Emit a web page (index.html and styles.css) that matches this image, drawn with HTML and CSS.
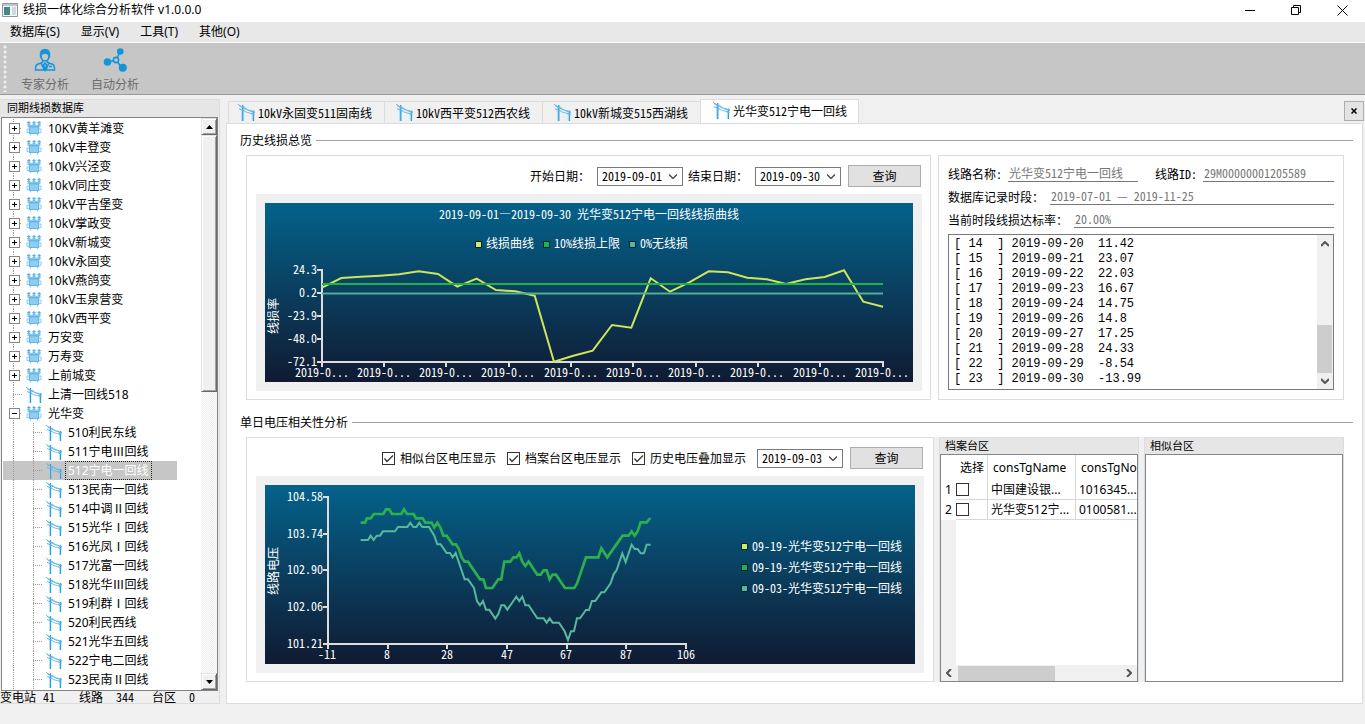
FILE: index.html
```html
<!DOCTYPE html>
<html lang="zh-CN">
<head>
<meta charset="utf-8">
<title>线损一体化综合分析软件 v1.0.0.0</title>
<link rel="stylesheet" href="styles.css">
</head>
<body>
<svg class="defs" aria-hidden="true">
  <symbol id="i-station" viewBox="0 0 16 16">
    <path d="M2.800 0v4M8 0v4M13.200 0v4" stroke="#8ccbf0" stroke-width="1.600"/>
    <path d="M1.200 1.500h3.200M6.400 1.500h3.200M11.600 1.500h3.200M1.200 3.200h3.200M6.400 3.200h3.200M11.600 3.200h3.200" stroke="#4fb0e6" stroke-width="1"/>
    <path d="M1.500 4.300h13v1.400h-1.300V13H2.800V5.700H1.500z" fill="#63b7e8"/>
    <path d="M5 6.500v5.500M7 6.500v5.500M9 6.500v5.500M11 6.500v5.500" stroke="#d4edfb" stroke-width=".8"/>
    <path d="M2.800 8H1v3.500h1.800M13.200 8H15v3.500h-1.800M4.500 13v1.500M11.500 13v1.500" stroke="#8ccbf0" fill="none"/>
  </symbol>
  <symbol id="i-line" viewBox="0 0 16 16">
    <path d="M4.500 1v15M14.500 6v10" stroke="#2c9fdc" stroke-width="1.300"/>
    <path d="M3.400 3v13M13.400 7v9" stroke="#a6d8f2" stroke-width=".8"/>
    <path d="M1 1.500l6 3M12 6.500l4 1.500M1 4.500l5 2M12.500 9l3 1" stroke="#63b7e8" stroke-width="1"/>
    <path d="M0 0c4 4 9 6 13 6.500M6 3c3 3 6 4 10 4.500M5 6c3 2 5 2.500 9 3" stroke="#63b7e8" stroke-width=".9" fill="none"/>
  </symbol>
</svg>

<header class="titlebar">
  <svg class="app-icon" viewBox="0 0 16 14" aria-hidden="true"><path fill="#f4f6f7" stroke="#8c979e" d="M.5.5h15v13H.5z"/><path fill="#b9c8d0" d="M1 1h14v2H1z"/><path fill="#3f8f7d" d="M2 4h6v8H2z"/><path fill="#4c78ad" d="M2 4h3v4H2z"/><path fill="#cfd8dd" d="M10 4h4v8h-4z"/></svg>
  <h1>线损一体化综合分析软件 v1.0.0.0</h1>
  <div class="win-controls">
    <button aria-label="最小化"><svg viewBox="0 0 11 11"><path d="M0 5.500h10"/></svg></button>
    <button aria-label="还原"><svg viewBox="0 0 11 11"><path d="M.5 2.500h7v7h-7zM2.500 2.500v-2h7v7h-2"/></svg></button>
    <button aria-label="关闭"><svg viewBox="0 0 11 11"><path d="M.5.500l10 10M10.500.500l-10 10"/></svg></button>
  </div>
</header>

<nav class="menubar">
  <button>数据库(S)</button><button>显示(V)</button><button>工具(T)</button><button>其他(O)</button>
</nav>

<div class="toolbar">
  <span class="grip"></span>
  <button>
    <svg viewBox="0 0 24 24" fill="none" stroke="#1296db" stroke-width="1.500"><path d="M8 7c0 4 2 6 4 6s4-2 4-6"/><path d="M7.500 8C7 3 9 1.500 12 1.500S17 3 16.500 8c-1-2-2-3-4.500-3S8.500 6 7.500 8z" fill="#1296db"/><path d="M9.500 12.500v2L4 16.500c-1 .5-1.500 2-1.500 5.500h19c0-3.500-.5-5-1.500-5.500l-5.500-2v-2M8 15l3 6.500M16 15l-3 6.500M12 15l-1.500 2 1.500 5 1.500-5zM16 18.500h3"/></svg>
    <span>专家分析</span>
  </button>
  <button>
    <svg viewBox="0 0 24 24" fill="#1296db"><path d="M4.500 14L13 12l4-8M13 12l6 8" fill="none" stroke="#1296db" stroke-width="1.600"/><circle cx="4.500" cy="14" r="3.800"/><circle cx="17.300" cy="3.500" r="3.300"/><circle cx="19.800" cy="19.800" r="4"/><circle cx="13" cy="12" r="2.600" fill="#c6c6c6" stroke="#1296db" stroke-width="1.600"/></svg>
    <span>自动分析</span>
  </button>
</div>

<div class="workspace">
  <aside class="side">
    <h2>同期线损数据库</h2>
    <div class="tree-box">
      <ul class="tree">
        <li><button class="br plus" aria-label="展开"></button><svg><use href="#i-station"/></svg><span>10KV黄羊滩变</span></li>
        <li><button class="br plus" aria-label="展开"></button><svg><use href="#i-station"/></svg><span>10kV丰登变</span></li>
        <li><button class="br plus" aria-label="展开"></button><svg><use href="#i-station"/></svg><span>10kV兴泾变</span></li>
        <li><button class="br plus" aria-label="展开"></button><svg><use href="#i-station"/></svg><span>10kV同庄变</span></li>
        <li><button class="br plus" aria-label="展开"></button><svg><use href="#i-station"/></svg><span>10kV平吉堡变</span></li>
        <li><button class="br plus" aria-label="展开"></button><svg><use href="#i-station"/></svg><span>10kV掌政变</span></li>
        <li><button class="br plus" aria-label="展开"></button><svg><use href="#i-station"/></svg><span>10kV新城变</span></li>
        <li><button class="br plus" aria-label="展开"></button><svg><use href="#i-station"/></svg><span>10kV永固变</span></li>
        <li><button class="br plus" aria-label="展开"></button><svg><use href="#i-station"/></svg><span>10kV燕鸽变</span></li>
        <li><button class="br plus" aria-label="展开"></button><svg><use href="#i-station"/></svg><span>10kV玉泉营变</span></li>
        <li><button class="br plus" aria-label="展开"></button><svg><use href="#i-station"/></svg><span>10kV西平变</span></li>
        <li><button class="br plus" aria-label="展开"></button><svg><use href="#i-station"/></svg><span>万安变</span></li>
        <li><button class="br plus" aria-label="展开"></button><svg><use href="#i-station"/></svg><span>万寿变</span></li>
        <li><button class="br plus" aria-label="展开"></button><svg><use href="#i-station"/></svg><span>上前城变</span></li>
        <li><i class="br leaf"></i><svg><use href="#i-line"/></svg><span>上清一回线518</span></li>
        <li><button class="br minus" aria-label="折叠"></button><svg><use href="#i-station"/></svg><span>光华变</span></li>
        <li class="child"><i class="br leaf"></i><svg><use href="#i-line"/></svg><span>510利民东线</span></li>
        <li class="child"><i class="br leaf"></i><svg><use href="#i-line"/></svg><span>511宁电Ⅲ回线</span></li>
        <li class="child selected"><i class="br leaf"></i><svg><use href="#i-line"/></svg><span>512宁电一回线</span></li>
        <li class="child"><i class="br leaf"></i><svg><use href="#i-line"/></svg><span>513民南一回线</span></li>
        <li class="child"><i class="br leaf"></i><svg><use href="#i-line"/></svg><span>514中调Ⅱ回线</span></li>
        <li class="child"><i class="br leaf"></i><svg><use href="#i-line"/></svg><span>515光华Ⅰ回线</span></li>
        <li class="child"><i class="br leaf"></i><svg><use href="#i-line"/></svg><span>516光凤Ⅰ回线</span></li>
        <li class="child"><i class="br leaf"></i><svg><use href="#i-line"/></svg><span>517光富一回线</span></li>
        <li class="child"><i class="br leaf"></i><svg><use href="#i-line"/></svg><span>518光华Ⅲ回线</span></li>
        <li class="child"><i class="br leaf"></i><svg><use href="#i-line"/></svg><span>519利群Ⅰ回线</span></li>
        <li class="child"><i class="br leaf"></i><svg><use href="#i-line"/></svg><span>520利民西线</span></li>
        <li class="child"><i class="br leaf"></i><svg><use href="#i-line"/></svg><span>521光华五回线</span></li>
        <li class="child"><i class="br leaf"></i><svg><use href="#i-line"/></svg><span>522宁电二回线</span></li>
        <li class="child"><i class="br leaf"></i><svg><use href="#i-line"/></svg><span>523民南Ⅱ回线</span></li>
      </ul>
      <div class="classic-scroll">
        <button aria-label="向上滚动"><svg viewBox="0 0 7 4"><path d="M0 4l3.500-4L7 4z"/></svg></button>
        <span class="thumb"></span>
        <button class="last" aria-label="向下滚动"><svg viewBox="0 0 7 4"><path d="M0 0l3.500 4L7 0z"/></svg></button>
      </div>
    </div>
    <dl class="counts"><dt>变电站</dt><dd>41</dd><dt>线路</dt><dd>344</dd><dt>台区</dt><dd>0</dd></dl>
  </aside>

  <main class="main">
    <div class="tabs" role="tablist">
      <button role="tab"><svg><use href="#i-line"/></svg><span>10kV永固变511固南线</span></button>
      <button role="tab"><svg><use href="#i-line"/></svg><span>10kV西平变512西农线</span></button>
      <button role="tab"><svg><use href="#i-line"/></svg><span>10kV新城变515西湖线</span></button>
      <button role="tab" class="active" aria-selected="true"><svg><use href="#i-line"/></svg><span>光华变512宁电一回线</span></button>
      <button class="tab-close" aria-label="关闭标签"><svg viewBox="0 0 6 6"><path d="M.5.500l5 5M5.500.500l-5 5"/></svg></button>
    </div>

    <div class="page">
      <section>
        <h3>历史线损总览</h3>
        <div class="panels overview">
          <div class="frame">
            <div class="controls">
              <label for="from">开始日期：</label>
              <select id="from"><option>2019-09-01</option></select>
              <label class="second" for="to">结束日期：</label>
              <select id="to"><option>2019-09-30</option></select>
              <button>查询</button>
            </div>
            <div class="chart-box">
              <svg class="chart" viewBox="0 0 648 179" role="img" aria-label="线损曲线">
                <text class="mid" x="324" y="16">2019-09-01—2019-09-30 光华变512宁电一回线线损曲线</text>
                <g stroke="#06202e">
                  <path fill="#d0ec5a" d="M210.500 38.500h6v6h-6z"/><path fill="#1eb24a" d="M278.500 38.500h6v6h-6z"/><path fill="#58b89a" d="M364.500 38.500h6v6h-6z"/>
                </g>
                <text x="221" y="45">线损曲线</text><text x="289" y="45">10%线损上限</text><text x="375" y="45">0%无线损</text>
                <text class="mid" transform="translate(13 113) rotate(-90)">线损率</text>
                <g class="end"><text x="52" y="71">24.3</text><text x="52" y="94">0.2</text><text x="52" y="117">-23.9</text><text x="52" y="140">-48.0</text><text x="52" y="163">-72.1</text></g>
                <g class="axis"><path d="M57 66v94M56 159h563"/><path d="M52 67h5M52 90h5M52 113h5M52 136h5M52 159h5M57 159v5M119 159v5M181 159v5M244 159v5M306 159v5M368 159v5M431 159v5M493 159v5M555 159v5M618 159v5"/></g>
                <g class="mid"><text x="57" y="174">2019-0...</text><text x="119" y="174">2019-0...</text><text x="181" y="174">2019-0...</text><text x="243" y="174">2019-0...</text><text x="306" y="174">2019-0...</text><text x="368" y="174">2019-0...</text><text x="430" y="174">2019-0...</text><text x="492" y="174">2019-0...</text><text x="555" y="174">2019-0...</text><text x="617" y="174">2019-0...</text></g>
                <g class="series">
                  <polyline stroke="#cbe65a" points="57,84.700 76.300,75 95.700,73.700 115,72.700 134.300,71.300 153.700,68.300 173,71 192.300,83.700 211.700,75.700 231,87 250.300,88.300 269.700,92.700 289,158.700 308.300,152.700 327.700,147.700 347,122 366.300,124.700 385.700,75.300 405,88.700 424.300,79.300 443.700,68.300 463,69.300 482.300,74.700 501.700,76.300 521,81 540.300,76.300 559.700,74 579,67.300 598.300,98.700 618,103.700"/>
                  <path stroke="#1eb24a" d="M57 81h561"/><path stroke="#4fae93" d="M57 90.500h561"/>
                </g>
              </svg>
            </div>
          </div>

          <div class="frame info">
            <div class="field"><label for="name">线路名称:</label><input id="name" class="short" readonly value="光华变512宁电一回线"><label class="id" for="lid">线路ID:</label><input id="lid" readonly value="29M00000001205589"></div>
            <div class="field"><label for="span">数据库记录时段：</label><input id="span" readonly value="2019-07-01 — 2019-11-25"></div>
            <div class="field"><label for="rate">当前时段线损达标率：</label><input id="rate" readonly value="20.00%"></div>
            <div class="log">
              <pre>[ 14  ] 2019-09-20  11.42
[ 15  ] 2019-09-21  23.07
[ 16  ] 2019-09-22  22.03
[ 17  ] 2019-09-23  16.67
[ 18  ] 2019-09-24  14.75
[ 19  ] 2019-09-26  14.8
[ 20  ] 2019-09-27  17.25
[ 21  ] 2019-09-28  24.33
[ 22  ] 2019-09-29  -8.54
[ 23  ] 2019-09-30  -13.99</pre>
              <div class="vscroll">
                <svg viewBox="0 0 8 6"><path d="M0 5l4-4 4 4"/></svg>
                <span class="thumb"></span>
                <svg viewBox="0 0 8 6"><path d="M0 1l4 4 4-4"/></svg>
              </div>
            </div>
          </div>
        </div>
      </section>

      <section>
        <h3>单日电压相关性分析</h3>
        <div class="panels daily">
          <div class="frame">
            <div class="controls">
              <label class="check"><input type="checkbox" checked>相似台区电压显示</label>
              <label class="check"><input type="checkbox" checked>档案台区电压显示</label>
              <label class="check"><input type="checkbox" checked>历史电压叠加显示</label>
              <select aria-label="日期"><option>2019-09-03</option></select>
              <button>查询</button>
            </div>
            <div class="chart-box">
              <svg class="chart" viewBox="0 0 650 179" role="img" aria-label="线路电压">
                <text class="mid" transform="translate(13 86) rotate(-90)">线路电压</text>
                <g class="end"><text x="58" y="16">104.58</text><text x="58" y="53">103.74</text><text x="58" y="89">102.90</text><text x="58" y="126">102.06</text><text x="58" y="163">101.21</text></g>
                <g class="axis"><path d="M63 11v149M62 159h360"/><path d="M58 12h5M58 49h5M58 85h5M58 122h5M58 159h5M63 159v5M123 159v5M182 159v5M242 159v5M302 159v5M361 159v5M421 159v5"/></g>
                <g class="mid"><text x="62" y="174">-11</text><text x="122" y="174">8</text><text x="182" y="174">28</text><text x="242" y="174">47</text><text x="301" y="174">67</text><text x="361" y="174">87</text><text x="421" y="174">106</text></g>
                <g class="series3" transform="translate(-35 -75) scale(.3333)">
                  <polyline stroke="#2db04b" stroke-width="8" points="392,338 405,338 411,325 422,325 432,312 460,312 468,298 478,298 486,312 514,312 522,298 531,312 551,312 558,325 578,325 586,338 605,338 613,352 622,338 631,352 640,377 650,377 668,403 678,403 686,416 695,442 704,455 714,455 750,508 760,508 768,534 787,534 805,508 814,508 823,455 841,455 850,442 860,442 868,430 877,455 886,468 896,455 922,494 932,494 941,481 950,481 959,508 968,494 978,494 1005,534 1033,534 1041,521 1068,442 1105,442 1114,415 1132,442 1178,377 1196,377 1205,364 1214,377 1223,364 1232,337 1250,337 1261,324"/>
                  <polyline stroke="#58b89a" stroke-width="6" points="392,390 414,390 422,377 431,390 440,377 450,377 459,364 495,364 504,351 532,351 541,338 550,351 559,351 568,338 577,351 597,351 613,377 622,403 632,403 650,429 660,429 668,442 677,429 704,508 714,508 732,534 741,573 750,586 759,573 768,599 778,599 796,626 805,612 814,586 823,586 832,599 859,560 868,573 877,560 886,586 896,586 922,625 941,625 950,638 959,625 968,638 987,638 1004,664 1014,690 1023,664 1032,664 1041,625 1050,625 1068,600 1077,600 1086,573 1096,573 1114,547 1123,547 1142,520 1151,493 1160,480 1177,430 1187,456 1205,404 1214,417 1223,417 1232,430 1242,430 1250,404 1262,404"/>
                </g>
                <g stroke="#06202e">
                  <path fill="#d0ec5a" d="M476.500 58.500h6v6h-6z"/><path fill="#1eb24a" d="M476.500 79.500h6v6h-6z"/><path fill="#58b89a" d="M476.500 100.500h6v6h-6z"/>
                </g>
                <text x="487" y="66">09-19-光华变512宁电一回线</text><text x="487" y="87">09-19-光华变512宁电一回线</text><text x="487" y="108">09-03-光华变512宁电一回线</text>
              </svg>
            </div>
          </div>

          <div class="dock">
            <h4>档案台区</h4>
            <div class="dock-body">
              <div class="grid-view">
                <table>
                  <thead><tr><th class="num"></th><th class="pick">选择</th><th class="name">consTgName</th><th>consTgNo</th></tr></thead>
                  <tbody>
                    <tr><td class="num">1</td><td class="pick"><input type="checkbox" aria-label="选择 1"></td><td class="name">中国建设银...</td><td>1016345...</td></tr>
                    <tr><td class="num">2</td><td class="pick"><input type="checkbox" aria-label="选择 2"></td><td class="name">光华变512宁...</td><td>0100581...</td></tr>
                  </tbody>
                </table>
              </div>
              <div class="hscroll">
                <svg viewBox="0 0 6 8"><path d="M5 0L1 4l4 4"/></svg>
                <span class="thumb"></span>
                <svg viewBox="0 0 6 8"><path d="M1 0l4 4-4 4"/></svg>
              </div>
            </div>
          </div>

          <div class="dock">
            <h4>相似台区</h4>
            <div class="dock-body"></div>
          </div>
        </div>
      </section>
    </div>
  </main>
</div>
</body>
</html>
```
FILE: styles.css
```css
:root {
  --ui: "Noto Sans", "Noto Sans CJK SC", sans-serif;
  --cell: "Noto Sans Mono CJK SC", "Noto Sans CJK SC", monospace;
  --edge: #dcdcdc;
}
* { box-sizing: border-box; }
body {
  margin: 0;
  min-height: 100vh;
  display: flex;
  flex-direction: column;
  background: #f0f0f0;
  color: #000;
  font: 12px/16px var(--ui);
}
h1, h2, h3, h4, ul, dl, dd, pre { margin: 0; padding: 0; font-weight: normal; font-size: 12px; }
button, input, select { font: inherit; color: inherit; margin: 0; padding: 0; border: 0; background: none; border-radius: 0; }
.defs { position: absolute; width: 0; height: 0; }

.titlebar { display: flex; align-items: center; height: 22px; padding: 0 0 2px 2px; gap: 5px; background: #fff; }
.titlebar h1 { flex: 1; }
.app-icon { width: 16px; height: 14px; }
.win-controls { display: flex; }
.win-controls button { width: 46px; height: 20px; display: grid; place-items: center; }
.win-controls svg { width: 11px; height: 11px; fill: none; stroke: #000; }

.menubar { display: flex; gap: 21px; height: 21px; padding: 0 10px; background: #e8e8e8; border-bottom: 1px solid #fafafa; }

.toolbar { display: flex; height: 52px; background: #c6c6c6; border-bottom: 1px solid #999; color: #6c6c6c; font-family: var(--cell); }
.toolbar button { width: 70px; display: flex; flex-direction: column; align-items: center; gap: 4px; padding-top: 5px; }
.toolbar svg { width: 24px; height: 24px; }
.grip { width: 7px; margin: 2px 0 2px 3px; background: radial-gradient(circle at 2px 2px, #efefef 1px, transparent 2px) 0 0 / 7px 5px; }

.workspace { flex: 1; display: flex; gap: 6px; padding: 4px 2px 20px 0; }

.side { width: 220px; display: flex; flex-direction: column; border: 1px solid var(--edge); border-left: 0; align-self: flex-start; }
.side h2 { padding-left: 7px; height: 17px; background: #e6e6e6; font-size: 11px; }
.tree-box { display: flex; margin: 0 1px; border: 1px solid #828282; background: #fff; }
.tree { flex: 1; list-style: none; padding: 1px 0; }
.tree li {
  display: flex;
  align-items: center;
  height: 19px;
  background: repeating-linear-gradient(#999 0 1px, transparent 1px 2px) 11px 0 / 1px 100% no-repeat;
}
.tree li svg { width: 16px; height: 16px; flex: none; }
.tree li span { margin-left: 3px; padding: 0 2px; border: 1px solid transparent; height: 19px; line-height: 17px; white-space: nowrap; }
.tree .child { padding-left: 20px; }
.br { flex: none; width: 24px; height: 19px; display: grid; align-items: center; padding-left: 7px; background: repeating-linear-gradient(90deg, #999 0 1px, transparent 1px 2px) 12px 9px / 8px 1px no-repeat; }
.br.leaf { background: repeating-linear-gradient(90deg, #999 0 1px, transparent 1px 2px) 11px 9px / 9px 1px no-repeat; }
.child .br { background: repeating-linear-gradient(90deg, #999 0 1px, transparent 1px 2px) 11px 9px / 9px 1px no-repeat, repeating-linear-gradient(#999 0 1px, transparent 1px 2px) 11px 0 / 1px 100% no-repeat; }
.plus::before, .minus::before { content: ""; width: 9px; height: 9px; border: 1px solid #868686; background: linear-gradient(#000, #000) center / 5px 1px no-repeat, linear-gradient(#000, #000) center / 1px 5px no-repeat, #fff; }
.minus::before { background: linear-gradient(#000, #000) center / 5px 1px no-repeat, #fff; }
.tree .selected { margin: 0 24px 0 1px; padding-left: 19px; color: #fff; background-color: #c6c6c6; background-position: 10px 0; }
.tree .selected span { border: 1px dotted #222; }

.classic-scroll { width: 16px; display: flex; flex-direction: column; background: repeating-conic-gradient(#fff 0 25%, #ededed 0 50%) 0 0 / 2px 2px; }
.classic-scroll button, .classic-scroll .thumb { background: #f0f0f0; border: 1px solid; border-color: #e3e3e3 #696969 #696969 #e3e3e3; box-shadow: inset 1px 1px #fff, inset -1px -1px #a0a0a0; }
.classic-scroll button { height: 17px; display: grid; place-items: center; }
.classic-scroll svg { width: 7px; height: 4px; }
.classic-scroll .thumb { flex: 0 0 45%; }
.classic-scroll .last { margin-top: auto; }
.counts { display: flex; height: 12px; line-height: 12px; font-family: var(--cell); }
.counts dt { flex: none; width: 43px; }
.counts dt ~ dt { width: 37px; }
.counts dd { flex: none; width: 36px; }
.counts dd:last-child { width: auto; }

.main { flex: 1; min-width: 0; display: flex; flex-direction: column; font-family: var(--cell); }
.tabs { display: flex; align-items: flex-end; height: 24px; padding-left: 2px; }
.tabs [role="tab"] { display: flex; align-items: center; gap: 3px; height: 22px; padding: 0 12px 0 11px; border: 1px solid var(--edge); border-bottom: 0; border-right: 0; }
.tabs [role="tab"]:first-child { padding-left: 9px; }
.tabs [role="tab"] svg { width: 17px; height: 17px; }
.tabs .active { height: 25px; margin-bottom: -1px; padding: 0 11px 3px 12px; background: #fff; border-right: 1px solid var(--edge); }
.tab-close { display: grid; place-items: center; width: 20px; height: 20px; margin: 0 -1px 2px auto; background: #e3e3e3; border: 1px solid #adadad; }
.tab-close svg { width: 6px; height: 6px; stroke: #000; stroke-width: 1.5; }

.page { flex: 1; display: flex; flex-direction: column; gap: 14px; padding: 8px 9px 20px 13px; background: #fff; border: 1px solid var(--edge); }
.page h3 { display: flex; align-items: center; gap: 4px; height: 16px; }
.page h3::after { content: ""; flex: 1; height: 1px; background: #a0a0a0; }
.panels { display: flex; height: 245px; margin: 7px 9px 0 6px; }
.overview { gap: 7px; }
.frame { flex: 1; min-width: 0; border: 1px solid var(--edge); background: #fff; padding: 9px; display: flex; flex-direction: column; }
.overview .frame { padding-right: 8px; }

.controls { display: flex; align-items: center; justify-content: flex-end; height: 22px; margin-bottom: 7px; padding-right: 1px; }
.controls label { margin-right: 7px; }
.controls .second { margin-left: 5px; }
.controls button { width: 73px; height: 22px; margin-left: 7px; background: #e1e1e1; border: 1px solid #adadad; }
.controls select {
  appearance: none;
  width: 86px;
  height: 19px;
  padding-left: 4px;
  border: 1px solid #7a7a7a;
  background: #fff url("data:image/svg+xml,%3Csvg xmlns='http://www.w3.org/2000/svg' width='8' height='5'%3E%3Cpath d='M0 .5l4 4 4-4' fill='none' stroke='%23444' stroke-width='1.300'/%3E%3C/svg%3E") right 5px center no-repeat;
  line-height: 16px;
}
.check { display: flex; align-items: center; gap: 5px; }
.controls .check { margin-right: 11px; }
input[type="checkbox"] { appearance: none; width: 13px; height: 13px; border: 1px solid #333; background: #fff; flex: none; display: block; }
input[type="checkbox"]:checked { background: #fff url("data:image/svg+xml,%3Csvg xmlns='http://www.w3.org/2000/svg' width='11' height='11'%3E%3Cpath d='M1.500 5.500l2.500 3 6-6' fill='none' stroke='%23333' stroke-width='1.200'/%3E%3C/svg%3E") center no-repeat; }

.chart-box { flex: 1; padding: 9px; background: #f0f0f0; }
.chart { display: block; width: 100%; height: 179px; background: linear-gradient(#04628b, #101a32); }
.chart text { fill: #fff; font: 12px var(--cell); }
.chart .mid { text-anchor: middle; }
.chart .end { text-anchor: end; }
.axis path { fill: none; stroke: #dcdcdc; stroke-width: 2; }
.series polyline, .series path { fill: none; stroke-width: 2; }
.series3 polyline { fill: none; }

.overview .info { flex: 0 0 406px; gap: 2px; padding: 7px 9px 9px; }
.field { display: flex; height: 21px; align-items: center; }
.field input { flex: 1; min-width: 0; height: 17px; padding: 0 1px 2px; color: #777; border-bottom: 1px solid #777; margin-left: 6px; }
.field .short { flex: 0 0 130px; }
.field .id { margin-left: 17px; }
.log { flex: 1; min-height: 0; display: flex; align-items: flex-end; margin-top: 2px; border: 1px solid #7a7a7a; overflow: hidden; }
.log pre { flex: 1; padding: 0 5px 2px; font: 12px/15px "Liberation Mono", monospace; }
.vscroll { width: 16px; height: 100%; display: flex; flex-direction: column; align-items: center; padding: 6px 1px 5px 0; background: #f0f0f0; }
.vscroll svg { width: 8px; height: 6px; }
.vscroll svg, .hscroll svg { fill: none; stroke: #555; stroke-width: 2; flex: none; }
.vscroll .thumb { width: 15px; height: 48px; margin: auto 0 5px; background: #cdcdcd; }

.daily { background: #f0f0f0; gap: 5px; }
.dock { flex: 0 0 200px; min-width: 0; display: flex; flex-direction: column; border: 1px solid var(--edge); border-bottom: 0; font-family: var(--ui); }
.dock h4 { height: 16px; padding-left: 5px; background: #e6e6e6; font-size: 11px; }
.dock-body { flex: 1; min-height: 0; display: flex; flex-direction: column; background: #fff; border: 1px solid #828790; }
.grid-view { flex: 1; overflow: hidden; background: linear-gradient(90deg, #f0f0f0 15px, #fff 15px); }
.grid-view table { table-layout: fixed; width: 224px; border-collapse: separate; border-spacing: 0; background: #fff; }
.grid-view th, .grid-view td { height: 20px; padding: 0 0 0 3px; font-weight: normal; text-align: left; border: solid #d8d8d8; border-width: 0 1px 1px 0; white-space: nowrap; }
.grid-view th { height: 25px; border-bottom: 0; padding-left: 5px; }
.grid-view .num { width: 15px; padding: 0 0 0 4px; border-right: 0; border-bottom: 0; }
.grid-view .pick { width: 32px; padding-left: 0; }
.grid-view th.pick { padding-left: 4px; }
.grid-view .name { width: 88px; }
.hscroll { height: 16px; display: flex; align-items: center; padding: 0 5px; background: #f0f0f0; }
.hscroll svg { width: 6px; height: 8px; }
.hscroll .thumb { width: 97px; height: 15px; margin: 0 auto 0 6px; background: #cdcdcd; }
```
